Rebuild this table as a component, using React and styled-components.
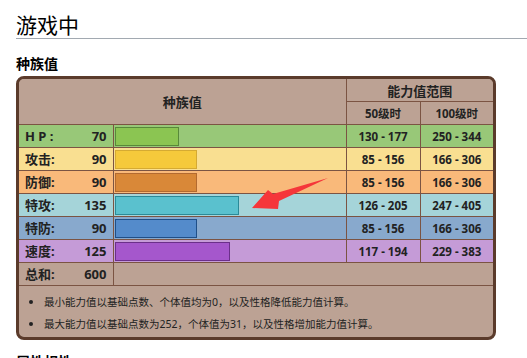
import styled, { createGlobalStyle } from 'styled-components';

const GlobalStyle = createGlobalStyle`
    body {
        margin: 0;
        background: #fff;
        font-family: "Noto Sans", "Noto Sans CJK SC", sans-serif;
        color: #202122;
    }
`;

const stats = [
    { label: 'H P :', value: 70, lv50: '130 - 177', lv100: '250 - 344', row: '#98c878', bar: '#8bc552', edge: '#58893a' },
    { label: '攻击:', value: 90, lv50: '85 - 156', lv100: '166 - 306', row: '#f9df91', bar: '#f5c93b', edge: '#d5aa32' },
    { label: '防御:', value: 90, lv50: '85 - 156', lv100: '166 - 306', row: '#f9b97a', bar: '#d98838', edge: '#b36a30' },
    { label: '特攻:', value: 135, lv50: '126 - 205', lv100: '247 - 405', row: '#a5d4d9', bar: '#5ac1ce', edge: '#2b8a98' },
    { label: '特防:', value: 90, lv50: '85 - 156', lv100: '166 - 306', row: '#88a9cd', bar: '#548bcb', edge: '#1f4f88' },
    { label: '速度:', value: 125, lv50: '117 - 194', lv100: '229 - 383', row: '#c59bd7', bar: '#a557cc', edge: '#6b2f8a' },
];

const App = () => {
    return (
    <Page>
        <GlobalStyle />
        <Heading>游戏中</Heading>
        <SubHeading>种族值</SubHeading>
        <Frame>
            <Table>
                <colgroup>
                    <col style={{ width: 94 }} />
                    <col style={{ width: 233 }} />
                    <col style={{ width: 74 }} />
                    <col />
                </colgroup>
                <tbody>
                    <tr>
                        <HeadCell colSpan={2} rowSpan={2}>种族值</HeadCell>
                        <HeadCell colSpan={2} $h={22}>能力值范围</HeadCell>
                    </tr>
                    <tr>
                        <SubHeadCell>50级时</SubHeadCell>
                        <SubHeadCell>100级时</SubHeadCell>
                    </tr>
                    {stats.map((s) => (
                        <Row key={s.label} $bg={s.row}>
                            <LabelCell>
                                <Label>{s.label}</Label>
                                <Value>{s.value}</Value>
                            </LabelCell>
                            <BarCell>
                                <Bar $bg={s.bar} $edge={s.edge} style={{ width: `${(s.value / 250) * 100}%` }} />
                            </BarCell>
                            <RangeCell>{s.lv50}</RangeCell>
                            <RangeCell>{s.lv100}</RangeCell>
                        </Row>
                    ))}
                    <Row>
                        <LabelCell>
                            <Label>总和:</Label>
                            <Value>600</Value>
                        </LabelCell>
                        <BarCell colSpan={3} />
                    </Row>
                    <tr>
                        <NotesCell colSpan={4}>
                            <Notes>
                                <li>最小能力值以基础点数、个体值均为0，以及性格降低能力值计算。</li>
                                <li>最大能力值以基础点数为252，个体值为31，以及性格增加能力值计算。</li>
                            </Notes>
                        </NotesCell>
                    </tr>
                </tbody>
            </Table>
            <Arrow viewBox="0 0 80 34" width="80" height="34">
                <polygon points="0,30 16,12 21,16 76,0 27,23 26,31" fill="#f5363a" />
            </Arrow>
        </Frame>
        <NextHeading>属性相性</NextHeading>
    </Page>
    )
}

const Page = styled.div`
    padding: 12px 0 0 16px;
    overflow: hidden;
    height: 358px;
    box-sizing: border-box;
`;

const Heading = styled.h2`
    margin: 0;
    font-size: 21px;
    line-height: 26px;
    font-weight: normal;
    color: #000;
    border-bottom: 1px solid #a2a9b1;
`;

const SubHeading = styled.h3`
    margin: 15px 0 2px;
    font-size: 14px;
    line-height: 20px;
    font-weight: bold;
    color: #000;
`;

const Frame = styled.div`
    position: relative;
    width: 480px;
    box-sizing: border-box;
    border: 3px solid #5b3b2b;
    border-radius: 8px;
    background: #bca294;
    overflow: hidden;
`;

const Table = styled.table`
    width: 100%;
    border-collapse: collapse;
    table-layout: fixed;
    color: #222;

    td {
        border: 1px solid #7b5443;
        padding: 0;
    }
    tr:first-child td { border-top: none; }
    td:first-child { border-left: none; }
    td:last-child { border-right: none; }
    tr:last-child td { border-bottom: none; }
`;

const HeadCell = styled.td`
    height: ${(p) => (p.$h ? `${p.$h}px` : 'auto')};
    text-align: center;
    font-weight: bold;
    font-size: 13px;
    background: #bca294;
`;

const SubHeadCell = styled.td`
    height: 22px;
    text-align: center;
    font-weight: bold;
    font-size: 11.5px;
    background: #bca294;
`;

const Row = styled.tr`
    background: ${(p) => p.$bg || '#bca294'};
    td { height: 22px; }
`;

const LabelCell = styled.td`
    padding: 0 6px 0 6px !important;
`;

const Label = styled.span`
    float: left;
    font-size: 13px;
    font-weight: bold;
    line-height: 22px;
`;

const Value = styled.span`
    float: right;
    font-size: 13px;
    font-weight: bold;
    line-height: 22px;
`;

const BarCell = styled.td`
    padding: 0 1px !important;
`;

const Bar = styled.div`
    height: 19px;
    box-sizing: border-box;
    background: ${(p) => p.$bg};
    border: 1px solid ${(p) => p.$edge};
`;

const RangeCell = styled.td`
    text-align: center;
    font-weight: bold;
    font-size: 11.5px;
`;

const NotesCell = styled.td`
    padding: 5px 0 2px !important;
`;

const Notes = styled.ul`
    margin: 0;
    padding: 0 0 0 25px;
    font-size: 10.5px;
    line-height: 22px;
    color: #222;

    li::marker {
        font-size: 11px;
    }
`;

const Arrow = styled.svg`
    position: absolute;
    left: 233px;
    top: 99px;
`;

const NextHeading = styled.h3`
    margin: 12px 0 0;
    font-size: 14px;
    line-height: 20px;
    font-weight: bold;
    color: #000;
`;

export default App
